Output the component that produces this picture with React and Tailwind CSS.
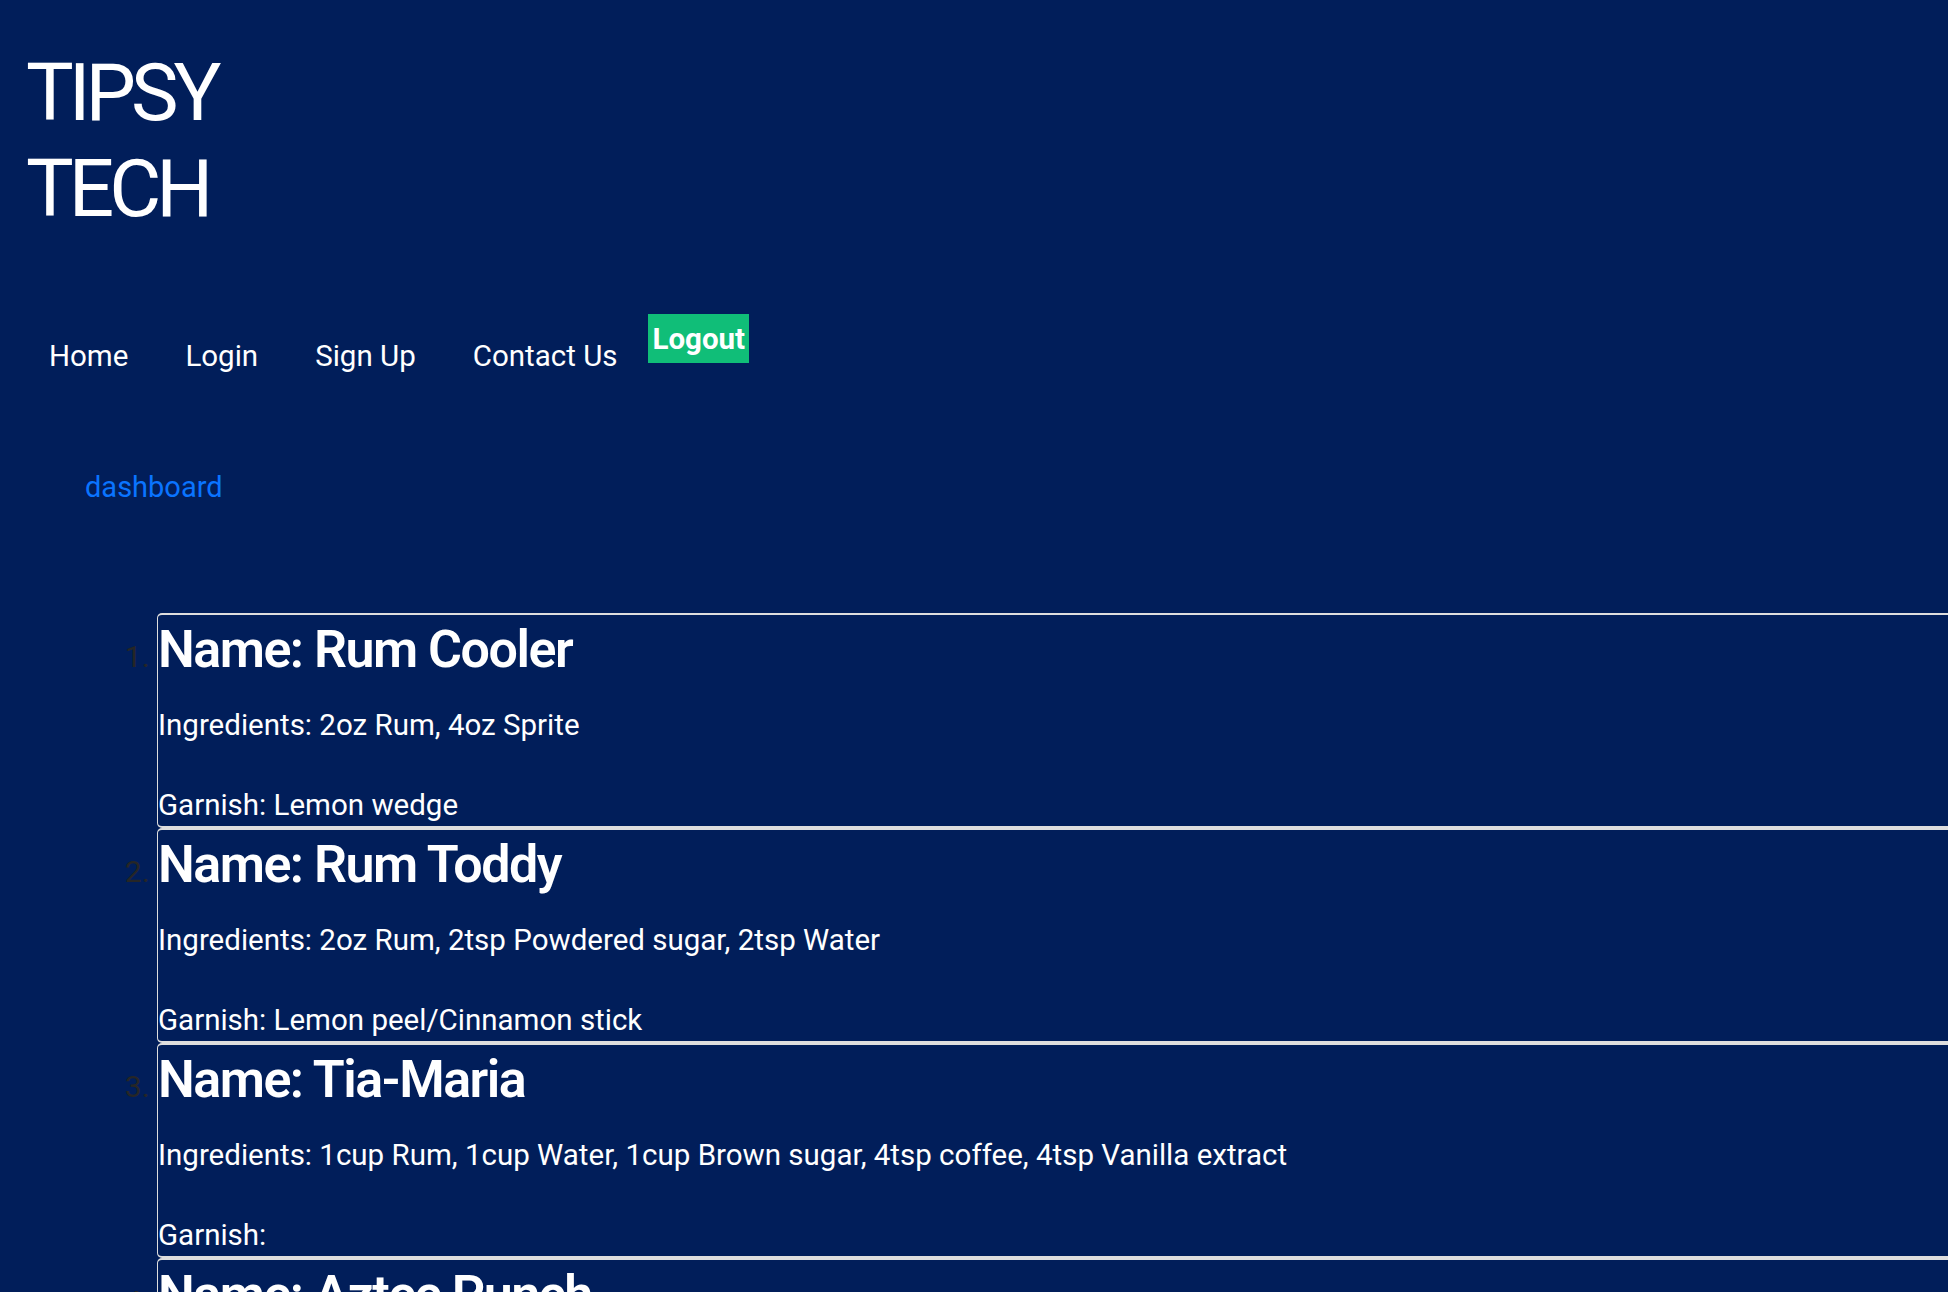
import React from "react";

const drinks = [
  {
    name: "Rum Cooler",
    ingredients: "2oz Rum, 4oz Sprite",
    garnish: "Lemon wedge",
  },
  {
    name: "Rum Toddy",
    ingredients: "2oz Rum, 2tsp Powdered sugar, 2tsp Water",
    garnish: "Lemon peel/Cinnamon stick",
  },
  {
    name: "Tia-Maria",
    ingredients:
      "1cup Rum, 1cup Water, 1cup Brown sugar, 4tsp coffee, 4tsp Vanilla extract",
    garnish: "",
  },
  {
    name: "Aztec Punch",
    ingredients: "2oz Rum, 4oz Iced tea, 1oz Lemon juice, 1tsp Sugar",
    garnish: "Orange slice",
  },
];

const navLinks = ["Home", "Login", "Sign Up", "Contact Us"];

export default function App() {
  return (
    <div className="h-screen overflow-hidden bg-[#011e5a] font-['Roboto','Liberation_Sans',sans-serif] text-white">
      {/* Brand */}
      <header className="pl-[26px] pt-[45px]">
        <h1 className="text-[80px] leading-[96px] tracking-[-5px] font-normal">
          TIPSY
          <br />
          TECH
        </h1>
      </header>

      {/* Nav */}
      <nav className="mt-[77px] flex items-start pl-[49px]">
        <ul className="flex gap-[57px] pt-[25px] text-[29.5px] leading-[34px]">
          {navLinks.map((link) => (
            <li key={link}>
              <a href="#" className="text-white">
                {link}
              </a>
            </li>
          ))}
        </ul>
        <button className="ml-[31px] flex h-[49px] items-center bg-[#10be78] px-[4px] text-[29.5px] leading-[34px] font-bold text-white">
          Logout
        </button>
      </nav>

      <a
        href="#"
        className="ml-[85px] mt-[97px] block w-fit text-[29px] leading-[34px] text-[#0a74ff]"
      >
        dashboard
      </a>

      {/* Drink list */}
      <ol className="mt-[109px] list-decimal pl-[157px]">
        {drinks.map((drink) => (
          <li key={drink.name} className="text-[30px] text-[#262626]">
            <div className="w-[1900px] rounded-[5px] border-l border-t-2 border-b-2 border-[#dedede] pt-[5px] pb-[4px] text-white">
              <h2 className="text-[52px] leading-[60px] font-semibold tracking-[-1.5px]">
                Name: {drink.name}
              </h2>
              <p className="mt-[28px] text-[29.5px] leading-[34px]">
                Ingredients: {drink.ingredients}
              </p>
              <p className="mt-[46px] text-[29.5px] leading-[34px]">
                Garnish: {drink.garnish}
              </p>
            </div>
          </li>
        ))}
      </ol>
    </div>
  );
}
